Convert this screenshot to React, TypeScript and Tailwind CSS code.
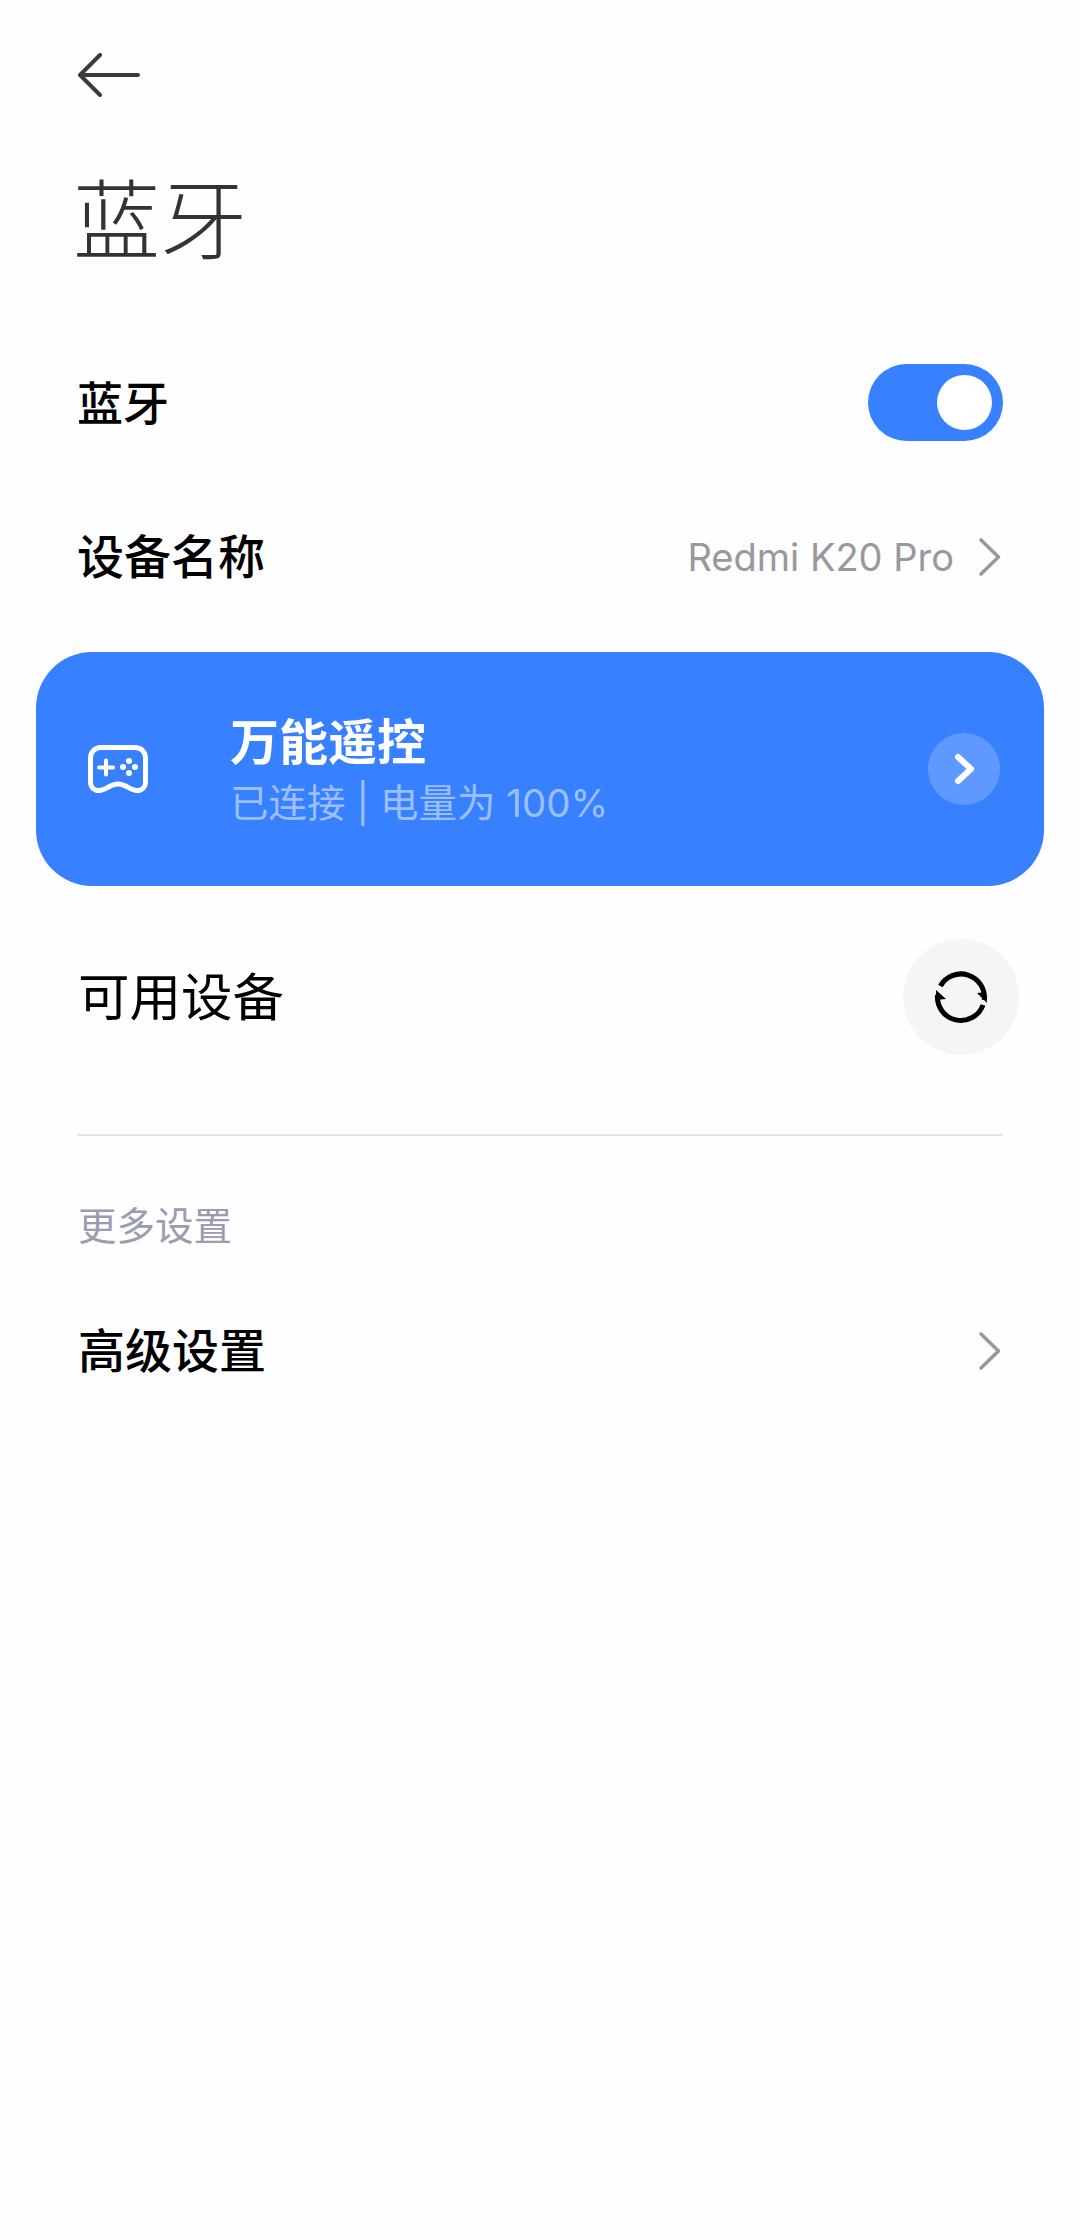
const cjk = "font-['Noto_Sans_CJK_SC',sans-serif]";

function Chevron() {
  return (
    <svg width="24" height="40" viewBox="0 0 24 40" fill="none" className="shrink-0">
      <path d="M3 3L20.5 20L3 37" stroke="#999999" strokeWidth="3.6" strokeLinecap="round" strokeLinejoin="round" />
    </svg>
  );
}

function Gamepad() {
  return (
    <svg width="60" height="48" viewBox="0 0 60 48" fill="none" className="shrink-0">
      <path
        d="M13 2.5H47C53 2.5 57.5 7 57.5 13V37C57.5 42 54 45.5 49 45.5C42 45.5 38 39 30 39C22 39 18 45.5 11 45.5C6 45.5 2.5 42 2.5 37V13C2.5 7 7 2.5 13 2.5Z"
        stroke="white"
        strokeWidth="5"
      />
      <path d="M11 22.5H25M18 15.5V29.5" stroke="white" strokeWidth="4" strokeLinecap="round" />
      <circle cx="41" cy="16" r="3" fill="white" />
      <circle cx="41" cy="28" r="3" fill="white" />
      <circle cx="35" cy="22" r="3" fill="white" />
      <circle cx="47" cy="22" r="3" fill="white" />
    </svg>
  );
}

function Refresh() {
  return (
    <svg width="60" height="60" viewBox="0 0 60 60" fill="none">
      <path d="M9.4 19A23.5 23.5 0 0 1 53.3 33" stroke="black" strokeWidth="5" />
      <path d="M46 26L56 36L55 25Z" fill="black" />
      <path d="M52 38A23.5 23.5 0 0 1 6.5 28" stroke="black" strokeWidth="5" />
      <path d="M5 23L15 32L5 33Z" fill="black" />
    </svg>
  );
}

export default function App() {
  return (
    <div className={`w-[1080px] min-h-[2240px] bg-[#fefdff] pt-[53px] ${cjk}`}>
      {/* Header */}
      <svg width="62" height="44" viewBox="0 0 62 44" fill="none" className="ml-[78px]">
        <path d="M22 2L2 22L22 42M2 22H60" stroke="#3a3a3c" strokeWidth="4" strokeLinecap="round" strokeLinejoin="round" />
      </svg>
      <h1 className="mt-[68px] ml-[73px] h-[104px] text-[87px] leading-[100px] font-light text-[#333336]">蓝牙</h1>

      {/* Bluetooth switch */}
      <div className="mt-[78px] h-[110px] pl-[77px] pr-[77px] flex items-center justify-between">
        <span className="mb-[4px] text-[46px] font-medium text-black">蓝牙</span>
        <div className="w-[135px] h-[77px] rounded-full bg-[#3780ff] flex items-center justify-end pr-[11px]">
          <div className="w-[55px] h-[55px] rounded-full bg-white" />
        </div>
      </div>

      {/* Device name */}
      <div className="mt-[45px] h-[110px] pl-[77px] pr-[78px] flex items-center justify-between">
        <span className="mb-[6px] text-[47px] font-medium text-black">设备名称</span>
        <div className="flex items-center gap-[24px]">
          <span className="font-['Inter',sans-serif] text-[38px] text-[#999999]">Redmi K20 Pro</span>
          <Chevron />
        </div>
      </div>

      {/* Connected device card */}
      <div className="mt-[40px] ml-[36px] w-[1008px] h-[234px] rounded-[56px] bg-[#3780ff] flex items-center pl-[52px] pr-[44px]">
        <Gamepad />
        <div className="ml-[82px] mt-[3px] flex-1">
          <div className="text-[49px] leading-[60px] font-bold text-white">万能遥控</div>
          <div className="font-['Inter','Noto_Sans_CJK_SC',sans-serif] mt-[4px] text-[38.5px] leading-[60px] text-white/50">
            已连接 | 电量为 100%
          </div>
        </div>
        <div className="w-[72px] h-[72px] rounded-full bg-white/20 flex items-center justify-center">
          <svg width="22" height="32" viewBox="0 0 22 32" fill="none" className="ml-[2px]">
            <path d="M4 4L17 16L4 28" stroke="white" strokeWidth="6" strokeLinecap="round" strokeLinejoin="round" />
          </svg>
        </div>
      </div>

      {/* Available devices */}
      <div className="mt-[53px] h-[116px] pl-[78px] pr-[61px] flex items-center justify-between">
        <span className="mb-[6px] text-[51.5px] text-black">可用设备</span>
        <div className="w-[116px] h-[116px] rounded-full bg-[#f5f5f7] flex items-center justify-center">
          <Refresh />
        </div>
      </div>

      <div className="mt-[79px] ml-[77px] w-[926px] h-[2px] bg-[#e5e5e8]" />

      {/* More settings */}
      <div className="mt-[62px] ml-[78px] h-[53px] text-[38.5px] leading-[50px] text-[#9a9db0]">更多设置</div>
      <div className="mt-[45px] h-[110px] pl-[78px] pr-[78px] flex items-center justify-between">
        <span className="mb-[6px] text-[47px] font-medium text-black">高级设置</span>
        <Chevron />
      </div>
    </div>
  );
}
